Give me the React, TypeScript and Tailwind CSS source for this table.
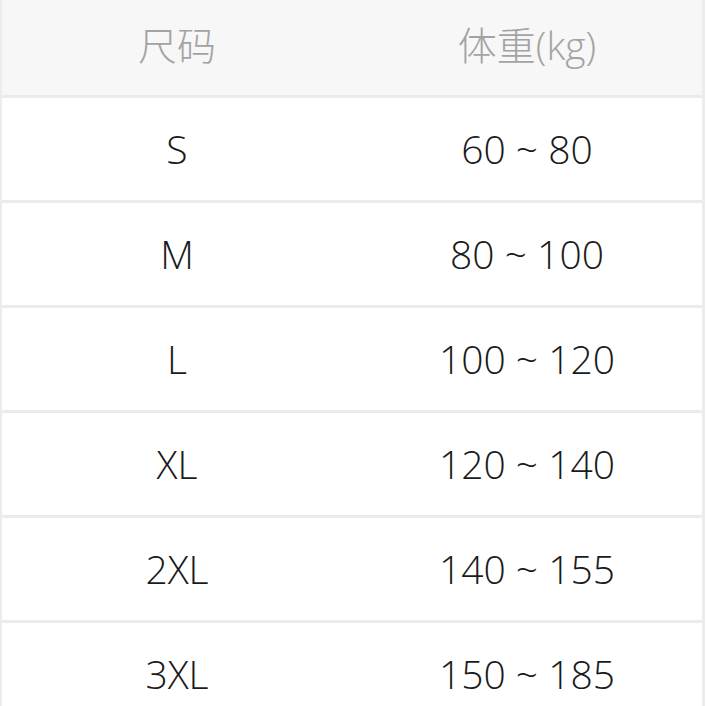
const rows: [string, string][] = [
  ["S", "60 ~ 80"],
  ["M", "80 ~ 100"],
  ["L", "100 ~ 120"],
  ["XL", "120 ~ 140"],
  ["2XL", "140 ~ 155"],
  ["3XL", "150 ~ 185"],
];

export default function App() {
  return (
    <div className="h-[706px] w-[706px] overflow-hidden bg-white font-['Open_Sans','Noto_Sans_CJK_SC',sans-serif] font-light">
      <div className="w-[705px] border-l-2 border-r-3 border-[#ececec]">
        {/* header */}
        <div className="grid h-[98px] grid-cols-2 border-b-3 border-[#ebebeb] bg-[#f7f7f7] text-[39px] text-[#a3a3a3]">
          <div className="flex items-center justify-center pb-1">尺码</div>
          <div className="flex items-center justify-center pb-1">体重(kg)</div>
        </div>
        {rows.map(([size, weight]) => (
          <div key={size} className="grid h-[105px] grid-cols-2 border-b-3 border-[#ebebeb] text-[39px] text-[#1a1a1a]">
            <div className="flex items-center justify-center">{size}</div>
            <div className="flex items-center justify-center">{weight}</div>
          </div>
        ))}
      </div>
    </div>
  );
}
